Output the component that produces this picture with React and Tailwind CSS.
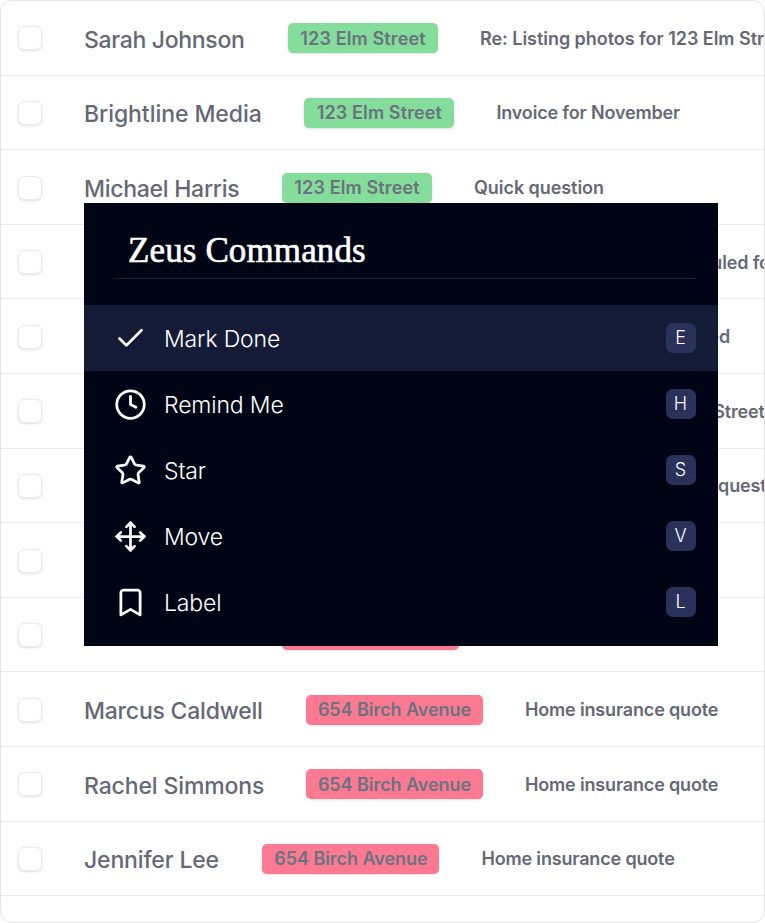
import { Bookmark, Check, Clock, Move, Star } from "lucide-react";

const emails = [
  { id: 1, name: "Sarah Johnson", nameClass: "w-[204px] tracking-[-0.32px]", tag: "123 Elm Street", subject: "Re: Listing photos for 123 Elm Street", subjectClass: "tracking-[-0.04px]" },
  { id: 2, name: "Brightline Media", nameClass: "w-[220.4px] tracking-[-0.06px]", tag: "123 Elm Street", subject: "Invoice for November" },
  { id: 3, name: "Michael Harris", nameClass: "w-[198px] tracking-[-0.27px]", tag: "123 Elm Street", subject: "Quick question", subjectClass: "tracking-[-0.06px]" },
  { id: 4, nameClass: "w-[573px]", subject: "Scheduled for" },
  { id: 5, nameClass: "w-[586.5px]", subject: "Signed" },
  { id: 6, nameClass: "w-[593.5px]", subject: "Elm Street" },
  { id: 7, nameClass: "w-[617px]", subject: "request" },
  { id: 8, nameClass: "w-[198px]" },
  { id: 9, nameClass: "w-[198px]", tag: " " },
  { id: 10, name: "Marcus Caldwell", nameClass: "w-[222px] tracking-[-0.22px]", tag: "654 Birch Avenue", subject: "Home insurance quote" },
  { id: 11, name: "Rachel Simmons", nameClass: "w-[222px] tracking-[-0.13px]", tag: "654 Birch Avenue", subject: "Home insurance quote" },
  { id: 12, name: "Jennifer Lee", nameClass: "w-[178.4px] tracking-[-0.16px]", tag: "654 Birch Avenue", subject: "Home insurance quote" },
];

const commands = [
  { label: "Mark Done", shortcut: "E", icon: Check, active: true },
  { label: "Remind Me", shortcut: "H", icon: Clock },
  { label: "Star", shortcut: "S", icon: Star },
  { label: "Move", shortcut: "V", icon: Move },
  { label: "Label", shortcut: "L", icon: Bookmark },
];

const EmailRow = ({ email }) => {
  const isElm = email.tag === "123 Elm Street";

  return (
    <li className="flex items-center h-[74.6px] shrink-0 border-b border-[#ebebec] pl-[17px] pt-[1.2px] whitespace-nowrap">
      <span className="w-6 h-6 shrink-0 rounded-md border border-[#ebebec] bg-white shadow-sm mr-[43px]" />
      <span className={`${email.nameClass} -ml-px pt-[3px] shrink-0 text-[23px] font-medium text-[#666876]`}>
        {email.name}
      </span>
      {email.tag && (
        <span
          className={`h-[30px] shrink-0 flex items-center justify-center rounded-[5px] shadow-sm text-[18px] font-semibold text-[#6b7280] mr-[42px] ${
            isElm ? "w-[150px] bg-[#84dd9a] tracking-[0.12px]" : "w-[177px] bg-[#fb7a92] tracking-[-0.06px]"
          }`}
        >
          {email.tag}
        </span>
      )}
      <span className={`text-[18px] font-semibold text-[#666876] ${email.subjectClass || "tracking-[-0.16px]"}`}>
        {email.subject}
      </span>
    </li>
  );
};

const CommandMenu = () => (
  <div className="absolute left-[84px] top-[203px] w-[634px] h-[443px] bg-[#000516] text-white">
    <h2 className="ml-[30px] mr-[22px] h-[76px] pt-[24px] pl-[14px] border-b border-[#141b36] font-['Liberation_Serif',serif] text-[35px] leading-[48px] tracking-[0.12px] whitespace-nowrap [-webkit-text-stroke:0.6px_white]">
      Zeus Commands
    </h2>
    <ul className="pt-[26px]">
      {commands.map(({ label, shortcut, icon: Icon, active }) => (
        <li
          key={label}
          className={`flex items-center h-[66px] pl-[30px] pr-[22px] ${active ? "bg-[#141b36]" : ""}`}
        >
          <Icon className="w-[33px] h-[33px] mt-px" strokeWidth={2} />
          <span className="ml-[17px] mt-[2px] flex-1 text-[23px] font-light tracking-[-0.15px]">
            {label}
          </span>
          <kbd className="w-[30px] h-[30px] mb-px pr-px flex items-center justify-center rounded-[7px] bg-[#2a325c] font-['Inter',sans-serif] text-[18px] font-light">
            {shortcut}
          </kbd>
        </li>
      ))}
    </ul>
  </div>
);

const App = () => {
  return (
    <div className="relative w-[765px] h-[923px] bg-white overflow-hidden font-['Inter',sans-serif]">
      <ul className="flex flex-col h-full border border-[#e5e5e7] rounded-xl overflow-hidden">
        {emails.map((email) => (
          <EmailRow key={email.id} email={email} />
        ))}
      </ul>
      <CommandMenu />
    </div>
  );
};

export default App;
